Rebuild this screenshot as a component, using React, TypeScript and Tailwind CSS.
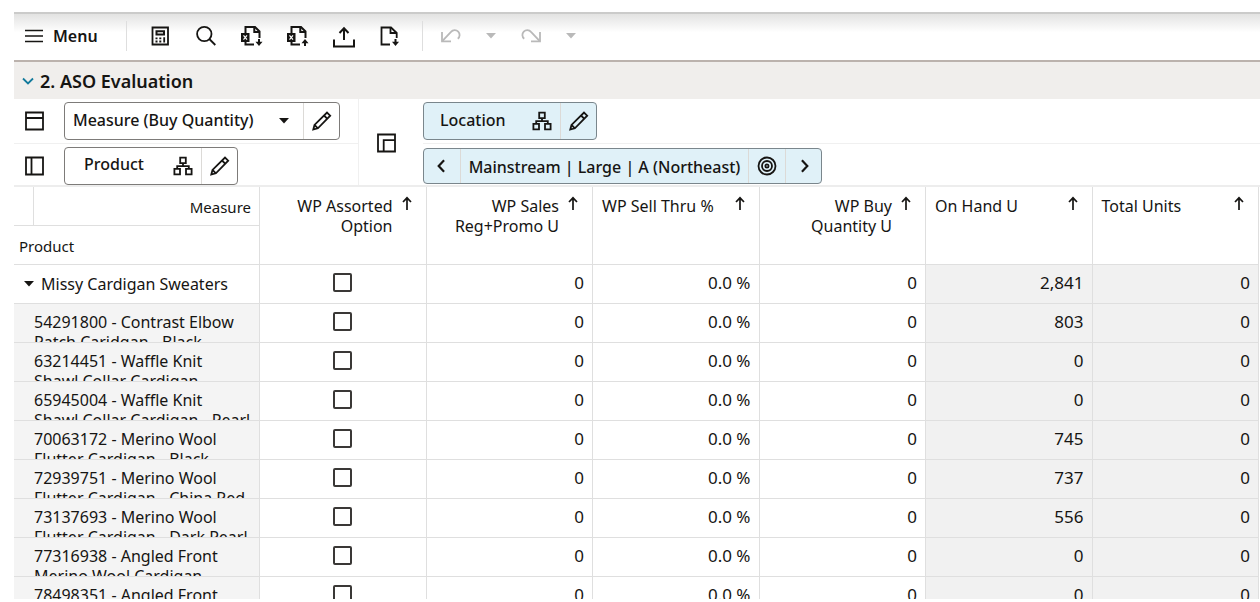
import React, { useState } from "react";

interface IconProps {
  className?: string;
}

interface Column {
  title: string[];
  readOnly?: boolean;
}

interface Row {
  label: string[];
  onHand: string;
}

// Grid columns, a title with two entries wraps and is right aligned
const columns: Column[] = [
  { title: ["WP Assorted", "Option"] },
  { title: ["WP Sales", "Reg+Promo U"] },
  { title: ["WP Sell Thru %"] },
  { title: ["WP Buy", "Quantity U"] },
  { title: ["On Hand U"], readOnly: true },
  { title: ["Total Units"], readOnly: true },
];

const rows: Row[] = [
  { label: ["54291800 - Contrast Elbow", "Patch Caridgan - Black"], onHand: "803" },
  { label: ["63214451 - Waffle Knit", "Shawl Collar Cardigan"], onHand: "0" },
  { label: ["65945004 - Waffle Knit", "Shawl Collar Cardigan - Pearl"], onHand: "0" },
  { label: ["70063172 - Merino Wool", "Flutter Cardigan - Black"], onHand: "745" },
  { label: ["72939751 - Merino Wool", "Flutter Cardigan - China Red"], onHand: "737" },
  { label: ["73137693 - Merino Wool", "Flutter Cardigan - Dark Pearl"], onHand: "556" },
  { label: ["77316938 - Angled Front", "Merino Wool Cardigan"], onHand: "0" },
  { label: ["78498351 - Angled Front", "Merino Wool Cardigan"], onHand: "0" },
];

const Svg = ({ className = "w-6 h-6", children }: IconProps & { children: React.ReactNode }) => (
  <svg viewBox="0 0 24 24" className={className} fill="none" stroke="currentColor" strokeWidth="1.8" aria-hidden="true">
    {children}
  </svg>
);

const MenuIcon = () => (
  <Svg>
    <path d="M2 6.5h18M2 12h18M2 17.500h18" strokeWidth="1.6" />
  </Svg>
);

const CalculatorIcon = () => (
  <Svg>
    <path d="M4.500 3.500h15.500v17H4.500z" />
    <path d="M8.500 7.300h7.500v3.200H8.500z" strokeWidth="2" />
    <path d="M7.500 14.300h2M11.300 14.300h2M7.500 17.500h2M11.300 17.500h2M16.200 13.300v5.200" />
  </Svg>
);

const SearchIcon = () => (
  <Svg>
    <circle cx="10.3" cy="10" r="7.2" />
    <path d="M15.300 15l6 6" />
  </Svg>
);

// Spreadsheet file with an X badge, the arrow is given as children
const SheetIcon = ({ children }: { children: React.ReactNode }) => (
  <Svg>
    <path d="M5.500 9V3h9.500l4.500 4.500V14" strokeWidth="2" />
    <path d="M14.300 3v5h5" strokeWidth="2" />
    <path d="M5.500 17v3.500h8.500" strokeWidth="2" />
    <rect x="1" y="9" width="8.5" height="9" fill="currentColor" stroke="none" />
    <path d="M3.500 11.300l3.500 4.400M7 11.300l-3.500 4.400" stroke="white" strokeWidth="1.2" />
    {children}
  </Svg>
);

const ImportSheetIcon = () => (
  <SheetIcon>
    <path d="M19 15v4" strokeWidth="2" />
    <path d="M15.500 17.800h7L19 22z" fill="currentColor" stroke="none" />
  </SheetIcon>
);

const ExportSheetIcon = () => (
  <SheetIcon>
    <path d="M19 18v4" strokeWidth="2" />
    <path d="M15.500 19.200h7L19 15z" fill="currentColor" stroke="none" />
  </SheetIcon>
);

const UploadIcon = () => (
  <Svg>
    <path d="M12 16V4.500M7.500 9L12 4.200 16.500 9" strokeWidth="2" />
    <path d="M2 15.500v7h20v-7" strokeWidth="2" />
  </Svg>
);

const DownloadFileIcon = () => (
  <Svg>
    <path d="M18.700 14V9L13 3.500H3.500v17H12" />
    <path d="M12.500 3.500V9h6" />
    <path d="M17.500 15v4" strokeWidth="2" />
    <path d="M14 17.800h7L17.500 22z" fill="currentColor" stroke="none" />
  </Svg>
);

const UndoIcon = ({ className }: IconProps) => (
  <Svg className={className}>
    <path d="M3 8v9.300h9" />
    <path d="M3.500 16.800L12 7.800a4.900 4.900 0 1 1 6.800 7" />
  </Svg>
);

const CaretIcon = ({ className = "w-3 h-[6px]" }: IconProps) => (
  <svg viewBox="0 0 12 6" className={className} fill="currentColor" aria-hidden="true">
    <path d="M1 0h10L6 5.500z" />
  </svg>
);

const RowAxisIcon = () => (
  <Svg>
    <path d="M3 3.500h17v17H3zM3 9h17" />
  </Svg>
);

const ColumnAxisIcon = () => (
  <Svg>
    <path d="M3 3.500h17v17H3zM8.500 3.500v17" />
  </Svg>
);

const PageAxisIcon = () => (
  <Svg>
    <path d="M3 4.500h17v17H3zM8.700 21.500V10.200H20" />
  </Svg>
);

const HierarchyIcon = () => (
  <Svg>
    <path d="M9.200 3.600h5.600v5.600H9.200zM3.400 14.900H9v5.500H3.400zM15 14.900h5.600v5.500H15z" />
    <path d="M12 9.200v2.900M6.200 14.900v-2.800h11.600v2.800" />
  </Svg>
);

const PencilIcon = () => (
  <Svg>
    <path d="M3.300 20.500l1.200-4.600L17 3.500l3.200 3.200L7.900 19.300zM14 6.500l3.200 3.200M4.500 15.900l3.400 3.400" />
  </Svg>
);

const TargetIcon = () => (
  <Svg>
    <circle cx="12" cy="12" r="8.5" />
    <circle cx="12" cy="12" r="5" />
    <circle cx="12" cy="12" r="1.6" />
  </Svg>
);

const ArrowUpIcon = () => (
  <svg viewBox="0 0 12 16" className="h-4 w-3 shrink-0" fill="none" stroke="currentColor" strokeWidth="1.7" aria-hidden="true">
    <path d="M6 14V2M2 6l4-4.200L10 6" />
  </svg>
);

const ToolButton = ({ title, children }: { title: string; children: React.ReactNode }) => (
  <button type="button" title={title} className="flex h-6 w-6 shrink-0 items-center justify-center">
    {children}
  </button>
);

const Toolbar = () => (
  <div className="flex h-[50px] shrink-0 items-center border-t-2 border-b-2 border-t-[#cbcbca] border-b-[#bbb2ad] bg-linear-to-b from-[#e3e3e2] via-white via-40% to-white pb-[2px]">
    <button type="button" className="flex items-center gap-[6px] pl-[9px] font-semibold">
      <MenuIcon />
      Menu
    </button>
    <div className="ml-7 h-[30px] w-px bg-[#dedede]" />
    <div className="ml-[21px] flex gap-[22px]">
      <ToolButton title="Calculate"><CalculatorIcon /></ToolButton>
      <ToolButton title="Find"><SearchIcon /></ToolButton>
      <ToolButton title="Import sheet"><ImportSheetIcon /></ToolButton>
      <ToolButton title="Export sheet"><ExportSheetIcon /></ToolButton>
      <ToolButton title="Commit"><UploadIcon /></ToolButton>
      <ToolButton title="Download"><DownloadFileIcon /></ToolButton>
    </div>
    <div className="ml-5 h-[30px] w-px bg-[#dedede]" />
    <div className="ml-4 flex gap-4 text-[#b9b9b9]">
      <ToolButton title="Undo"><UndoIcon /></ToolButton>
      <ToolButton title="Undo list"><CaretIcon /></ToolButton>
      <ToolButton title="Redo"><UndoIcon className="h-6 w-6 -scale-x-100" /></ToolButton>
      <ToolButton title="Redo list"><CaretIcon /></ToolButton>
    </div>
  </div>
);

const EditButton = ({ title }: { title: string }) => (
  <button type="button" title={title} className="flex h-full w-9 items-center justify-center border-l border-[#dcdad7]">
    <PencilIcon />
  </button>
);

const DimensionTile = ({ name }: { name: string }) => (
  <>
    <button type="button" className="flex h-full grow items-center justify-between pr-[6px] font-medium">
      <span className="pb-[3px]">{name}</span>
      <HierarchyIcon />
    </button>
    <EditButton title={`Edit ${name}`} />
  </>
);

const AxisBar = () => (
  <div className="flex h-[88px] shrink-0 border-b-2 border-[#ededed]">
    <div className="w-[345px] shrink-0 border-r border-[#f0f0f0]">
      <div className="flex h-[45px] items-center gap-[17px] border-b border-[#f0f0f0] pl-[9px]">
        <RowAxisIcon />
        <div className="flex h-[38px] w-[276px] items-center rounded border border-[#7d7b79]">
          <label className="relative flex h-full grow items-center">
            <select aria-label="Measure" className="h-full w-full appearance-none bg-transparent pb-[3px] pl-2 font-medium outline-none">
              <option>Measure (Buy Quantity)</option>
            </select>
            <CaretIcon className="pointer-events-none absolute right-[13px] h-[6px] w-3" />
          </label>
          <EditButton title="Edit Measure" />
        </div>
      </div>
      <div className="flex h-[41px] items-center gap-[17px] pt-[2px] pl-[9px]">
        <ColumnAxisIcon />
        <div className="flex h-[38px] w-[174px] items-center rounded border border-[#7d7b79] pl-[19px]">
          <DimensionTile name="Product" />
        </div>
      </div>
    </div>
    <div className="flex w-[64px] shrink-0 items-center pl-4">
      <PageAxisIcon />
    </div>
    <div className="grow">
      <div className="flex h-[45px] items-center border-b border-[#f0f0f0]">
        <div className="flex h-[38px] w-[174px] items-center rounded border border-[#7a868c] bg-[#e0f1f8] pl-4">
          <DimensionTile name="Location" />
        </div>
      </div>
      <div className="flex h-[41px] items-center pt-[2px]">
        <div className="flex h-9 w-[399px] items-center rounded border border-[#7a868c] bg-[#e0f1f8]">
          <button type="button" title="Previous" className="flex h-full w-9 items-center justify-center">
            <Svg className="h-5 w-5"><path d="M14.500 5L8 12l6.500 7" strokeWidth="2.6" /></Svg>
          </button>
          <button type="button" className="h-full grow border-x border-[#dcdad7] pt-[2px] font-medium whitespace-nowrap">
            Mainstream | Large | A (Northeast)
          </button>
          <button type="button" title="Select position" className="flex h-full w-9 items-center justify-center">
            <TargetIcon />
          </button>
          <button type="button" title="Next" className="flex h-full w-9 items-center justify-center border-l border-[#dcdad7]">
            <Svg className="h-5 w-5"><path d="M9.500 5l6.500 7-6.500 7" strokeWidth="2.6" /></Svg>
          </button>
        </div>
      </div>
    </div>
  </div>
);

const cell = "border-r border-b border-[#dfdfdf]";
const valueCell = `${cell} pt-0 pr-2 pb-[2px] pl-0 text-right text-[17px]`;

const ValueCells = ({ name, onHand }: { name: string; onHand: string }) => {
  const [assorted, setAssorted] = useState(false);

  return (
    <>
      <td className={`${cell} p-0 pb-[3px]`}>
        <div className="flex justify-center">
          <input
            type="checkbox"
            aria-label={`WP Assorted Option ${name}`}
            checked={assorted}
            onChange={() => setAssorted(!assorted)}
            className="h-[19px] w-[19px] appearance-none rounded-[2px] border-2 border-[#3a3836] bg-white checked:bg-[#3a3836]"
          />
        </div>
      </td>
      <td className={valueCell}>0</td>
      <td className={valueCell}>0.0 %</td>
      <td className={valueCell}>0</td>
      <td className={`${valueCell} bg-[#f1f1f1]`}>{onHand}</td>
      <td className={`${valueCell} bg-[#f1f1f1]`}>0</td>
    </>
  );
};

const EvaluationGrid = () => (
  <div className="min-h-0 grow overflow-hidden pr-px">
    <table className="w-full table-fixed border-separate border-spacing-0">
      <thead>
        <tr className="h-[78px]">
          <th className={`${cell} w-[246px] p-0 text-left text-[15px] font-normal`}>
            <div className="flex h-[39px] border-b border-[#dfdfdf]">
              <div className="w-5 border-r border-[#dfdfdf]" />
              <div className="grow pt-[10px] pr-2 text-right">Measure</div>
            </div>
            <div className="h-[38px] pt-[10px] pl-[5px]">Product</div>
          </th>
          {columns.map(({ title }) => (
            <th key={title[0]} className={`${cell} p-0 align-top font-normal`}>
              <div className="flex justify-between gap-2 pt-[9px] pr-[13px] pl-[9px]">
                <span className={title.length > 1 ? "grow text-right" : "text-left"}>
                  {title.map((line) => (
                    <span key={line} className="block whitespace-nowrap">{line}</span>
                  ))}
                </span>
                <ArrowUpIcon />
              </div>
            </th>
          ))}
        </tr>
      </thead>
      <tbody>
        <tr className="h-[39px]">
          <th className={`${cell} p-0 text-left font-normal`}>
            <button type="button" className="flex items-center gap-[6px] pl-[9px] whitespace-nowrap">
              <CaretIcon />
              Missy Cardigan Sweaters
            </button>
          </th>
          <ValueCells name="Missy Cardigan Sweaters" onHand="2,841" />
        </tr>
        {rows.map(({ label, onHand }) => (
          <tr key={label[0]} className="h-[39px]">
            <th className={`${cell} bg-[#f4f4f4] p-0 text-left font-normal`}>
              {/* the second line of a long name is cut off by the row */}
              <div className="h-[38px] overflow-hidden pt-2 pl-5">
                {label.map((line) => (
                  <span key={line} className="block whitespace-nowrap">{line}</span>
                ))}
              </div>
            </th>
            <ValueCells name={label[0]} onHand={onHand} />
          </tr>
        ))}
      </tbody>
    </table>
  </div>
);

const App = () => {
  return (
    <div className="flex h-screen flex-col overflow-hidden bg-white pt-3 pb-[3px] pl-[14px] font-['Noto_Sans',sans-serif] text-[16px] leading-5 text-[#161513]">
      <Toolbar />
      <h2 className="flex h-[37px] shrink-0 items-center gap-[6px] bg-[#f0eeec] pl-2 text-[18px] font-semibold">
        <svg viewBox="0 0 12 8" className="h-2 w-3" fill="none" stroke="#137a9c" strokeWidth="1.8" aria-hidden="true">
          <path d="M1 1.500l5 5 5-5" />
        </svg>
        2. ASO Evaluation
      </h2>
      <AxisBar />
      <EvaluationGrid />
    </div>
  );
};

export default App;
